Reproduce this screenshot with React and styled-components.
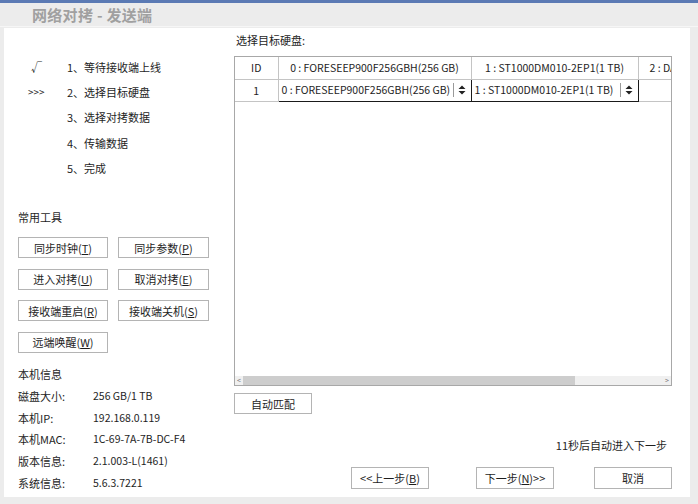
import React from 'react';
import styled, { createGlobalStyle } from 'styled-components';

const Global = createGlobalStyle`
  html, body { margin: 0; padding: 0; }
  body {
    width: 698px; height: 504px; overflow: hidden; background: #ececec;
    font-family: "Noto Sans CJK SC", "Noto Sans", sans-serif;
    font-size: 11px; color: #1e1e1e;
  }
  * { box-sizing: border-box; }
`;

const Window = styled.div`
  width: 698px; height: 504px;
  display: flex; flex-direction: column;
  background: #ececec;
  border-top: 3px solid #5b7ab4;
`;

const Header = styled.div`
  height: 24px; flex: none;
  display: flex; align-items: center;
  padding-left: 32px;
  font-size: 15px; font-weight: bold; color: #a0a0a0;
  letter-spacing: 0.3px;
  border-bottom: 1px solid #f6f6f6;
`;

const Panel = styled.div`
  margin: 1px 8px 7px 4px;
  flex: 1; min-height: 0;
  background: #fff;
  display: grid;
  grid-template-columns: 230px minmax(0, 1fr);
  padding-right: 18px;
`;

const LeftCol = styled.div`
  display: flex; flex-direction: column;
  padding: 26px 0 0 14px;
`;

const Steps = styled.div`
  display: flex; flex-direction: column;
  padding-left: 9px;
`;

const StepRow = styled.div`
  height: 25.3px; display: flex; align-items: center;
  line-height: 16px;
`;

const Marker = styled.span`
  width: 40px; flex: none;
  padding-left: ${p => p.$pad || 0}px;
  font-size: ${p => p.$small ? 10 : 11}px;
`;

const SectionLabel = styled.div`
  line-height: 16px; height: 16px;
  margin-top: ${p => p.$mt}px;
`;

const ToolGrid = styled.div`
  display: grid;
  grid-template-columns: 90px 91px;
  column-gap: 10px; row-gap: 10.5px;
  margin-top: 12px;
`;

const Button = styled.button`
  height: ${p => p.$h || 21}px;
  width: ${p => p.$w ? p.$w + 'px' : 'auto'};
  margin-left: ${p => p.$ml || 0}px;
  background: #fff;
  border: 1px solid #b4b4b4;
  font-family: inherit; font-size: 11px; color: #1e1e1e;
  padding: 0; line-height: 16px;
  display: flex; align-items: center; justify-content: center;
  u { text-decoration-thickness: 1px; text-underline-offset: 1px; }
`;

const InfoList = styled.div`
  display: flex; flex-direction: column; margin-top: 3px;
`;

const InfoRow = styled.div`
  height: 21.75px; display: flex; align-items: center; line-height: 16px;
`;

const InfoKey = styled.span`
  width: 75px; flex: none;
`;

const InfoValue = styled.span`
  font-size: 10.5px;
`;

const RightCol = styled.div`
  display: flex; flex-direction: column;
  padding-top: 4px;
  min-width: 0;
`;

const Title = styled.div`
  line-height: 16px; height: 16px; padding-left: 2px;
`;

const TableBox = styled.div`
  margin-top: 8px;
  height: 330px;
  border: 1px solid #a8a8a8;
  display: flex; flex-direction: column;
  overflow: hidden;
`;

const TableArea = styled.div`
  flex: 1; overflow: hidden; min-width: 0;
`;

const Table = styled.table`
  border-collapse: collapse;
  table-layout: fixed;
  width: 500px;
  font-size: 10.5px;
`;

const Th = styled.th`
  width: ${p => p.$w}px;
  height: 22px; padding: 0 0 0 ${p => p.$pl || 0}px;
  font-weight: normal; text-align: ${p => p.$left ? 'left' : 'center'};
  white-space: nowrap; overflow: hidden;
  border-right: 1px solid #c4c4c4;
  border-bottom: 1px solid #c4c4c4;
`;

const Td = styled.td`
  height: 22px; padding: 0;
  text-align: center;
  border-right: 1px solid #c4c4c4;
  border-bottom: 1px solid #c4c4c4;
`;

const ComboCell = styled.td`
  height: 22px; padding: 0;
  border: 1px solid #1a1a1a;
`;

const Combo = styled.div`
  display: flex; align-items: center; height: 20px;
`;

const ComboText = styled.span`
  flex: 1; min-width: 0; overflow: hidden; white-space: nowrap;
  padding-left: 3px;
  border-right: 1px solid #9a9a9a;
  line-height: 14px;
`;

const ComboArrow = styled.span`
  width: 17px; flex: none;
  display: flex; align-items: center; justify-content: center;
`;

const ScrollBar = styled.div`
  height: 9px; flex: none;
  display: flex; align-items: center;
  background: #f0f0f0;
  font-size: 7px; color: #777;
`;

const ScrollArrow = styled.span`
  width: 8px; text-align: center; line-height: 9px;
`;

const Track = styled.div`
  flex: 1; height: 9px; display: flex; align-items: stretch;
`;

const Thumb = styled.div`
  background: #cdcdcd;
`;

const AutoRow = styled.div`
  margin-top: 7px; display: flex;
`;

const Countdown = styled.div`
  margin-top: 23px; text-align: right; padding-right: 5px;
  line-height: 16px; height: 16px;
`;

const Footer = styled.div`
  margin-top: 14px; display: flex; justify-content: flex-end;
`;

const UpDown = () => (
  <svg width="8" height="10" viewBox="0 0 8 10">
    <path d="M4 0.5 L7.5 4 L0.5 4 Z M4 9.5 L7.5 6 L0.5 6 Z" fill="#222" />
  </svg>
);

const steps = [
  { mark: '√', pad: 4, text: '1、等待接收端上线' },
  { mark: '>>>', pad: 1, small: true, text: '2、选择目标硬盘' },
  { mark: '', text: '3、选择对拷数据' },
  { mark: '', text: '4、传输数据' },
  { mark: '', text: '5、完成' },
];

const tools = [
  ['同步时钟(', 'T', ')'],
  ['同步参数(', 'P', ')'],
  ['进入对拷(', 'U', ')'],
  ['取消对拷(', 'E', ')'],
  ['接收端重启(', 'R', ')'],
  ['接收端关机(', 'S', ')'],
  ['远端唤醒(', 'W', ')'],
];

const info = [
  ['磁盘大小:', '256 GB/1 TB'],
  ['本机IP:', '192.168.0.119'],
  ['本机MAC:', '1C-69-7A-7B-DC-F4'],
  ['版本信息:', '2.1.003-L(1461)'],
  ['系统信息:', '5.6.3.7221'],
];

export default function App() {
  return (
    <>
      <Global />
      <Window>
        <Header>网络对拷 - 发送端</Header>
        <Panel>
          <LeftCol>
            <Steps>
              {steps.map(s => (
                <StepRow key={s.text}>
                  <Marker $pad={s.pad} $small={s.small}>{s.mark}</Marker>
                  <span>{s.text}</span>
                </StepRow>
              ))}
            </Steps>
            <SectionLabel $mt={29}>常用工具</SectionLabel>
            <ToolGrid>
              {tools.map(t => (
                <Button key={t[0]}>{t[0]}<u>{t[1]}</u>{t[2]}</Button>
              ))}
            </ToolGrid>
            <SectionLabel $mt={13}>本机信息</SectionLabel>
            <InfoList>
              {info.map(r => (
                <InfoRow key={r[0]}>
                  <InfoKey>{r[0]}</InfoKey>
                  <InfoValue>{r[1]}</InfoValue>
                </InfoRow>
              ))}
            </InfoList>
          </LeftCol>
          <RightCol>
            <Title>选择目标硬盘:</Title>
            <TableBox>
              <TableArea>
                <Table>
                  <thead>
                    <tr>
                      <Th $w={43}>ID</Th>
                      <Th $w={193}>0 : FORESEEP900F256GBH(256 GB)</Th>
                      <Th $w={167}>1 : ST1000DM010-2EP1(1 TB)</Th>
                      <Th $w={97} $left $pl={11}>2 : DATA</Th>
                    </tr>
                  </thead>
                  <tbody>
                    <tr>
                      <Td>1</Td>
                      <ComboCell>
                        <Combo>
                          <ComboText>0 : FORESEEP900F256GBH(256 GB)</ComboText>
                          <ComboArrow><UpDown /></ComboArrow>
                        </Combo>
                      </ComboCell>
                      <ComboCell>
                        <Combo>
                          <ComboText>1 : ST1000DM010-2EP1(1 TB)</ComboText>
                          <ComboArrow><UpDown /></ComboArrow>
                        </Combo>
                      </ComboCell>
                      <Td></Td>
                    </tr>
                  </tbody>
                </Table>
              </TableArea>
              <ScrollBar>
                <ScrollArrow>&lt;</ScrollArrow>
                <Track>
                  <Thumb style={{ width: '332px' }} />
                </Track>
                <ScrollArrow>&gt;</ScrollArrow>
              </ScrollBar>
            </TableBox>
            <AutoRow>
              <Button $w={78}>自动匹配</Button>
            </AutoRow>
            <Countdown>11秒后自动进入下一步</Countdown>
            <Footer>
              <Button $w={78} $h={22}>&lt;&lt;上一步(<u>B</u>)</Button>
              <Button $w={78} $h={22} $ml={47}>下一步(<u>N</u>)&gt;&gt;</Button>
              <Button $w={78} $h={22} $ml={40}>取消</Button>
            </Footer>
          </RightCol>
        </Panel>
      </Window>
    </>
  );
}
